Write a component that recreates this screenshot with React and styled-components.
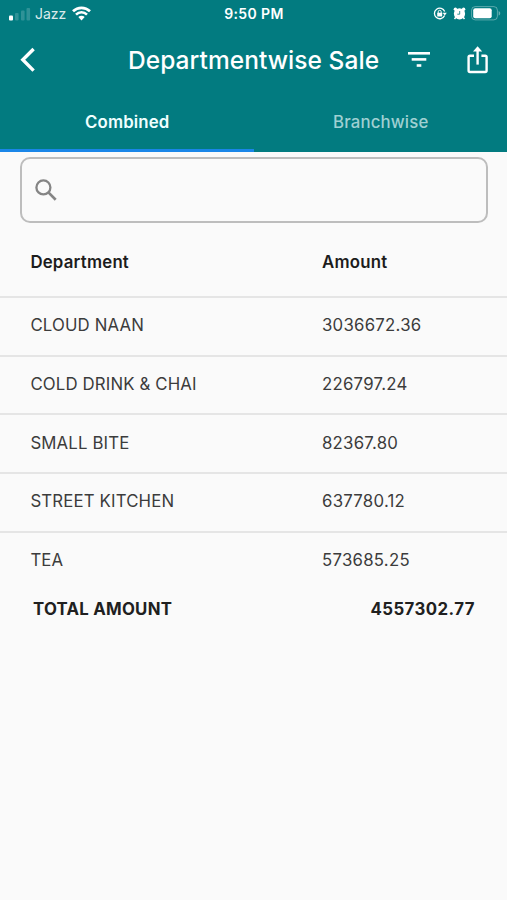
import React, { useState } from "react";
import styled, { createGlobalStyle } from "styled-components";

const departments = [
  { name: "CLOUD NAAN", amount: "3036672.36" },
  { name: "COLD DRINK & CHAI", amount: "226797.24" },
  { name: "SMALL BITE", amount: "82367.80" },
  { name: "STREET KITCHEN", amount: "637780.12" },
  { name: "TEA", amount: "573685.25" },
];

const tabs = ["Combined", "Branchwise"];

export default function App() {
  const [tab, setTab] = useState("Combined");

  return (
    <Screen>
      <GlobalStyle />
      <Header>
        <StatusBar>
          <Carrier>
            <SignalIcon />
            <CarrierName>Jazz</CarrierName>
            <WifiIcon />
          </Carrier>
          <Time>9:50 PM</Time>
          <StatusIcons>
            <RotationLockIcon />
            <AlarmIcon />
            <BatteryIcon />
          </StatusIcons>
        </StatusBar>
        <AppBar>
          <IconButton aria-label="Back">
            <BackIcon />
          </IconButton>
          <Title>Departmentwise Sale</Title>
          <Actions>
            <IconButton aria-label="Filter">
              <FilterIcon />
            </IconButton>
            <IconButton aria-label="Share">
              <ShareIcon />
            </IconButton>
          </Actions>
        </AppBar>
        <Tabs>
          {tabs.map((name) => (
            <Tab key={name} $active={name === tab} onClick={() => setTab(name)}>
              {name}
            </Tab>
          ))}
        </Tabs>
      </Header>
      <SearchBox>
        <SearchIcon />
        <SearchInput aria-label="Search" />
      </SearchBox>
      <TableHead>
        <span>Department</span>
        <span>Amount</span>
      </TableHead>
      {departments.map((item) => (
        <Row key={item.name}>
          <span>{item.name}</span>
          <Amount>{item.amount}</Amount>
        </Row>
      ))}
      <Total>
        <span>TOTAL AMOUNT</span>
        <TotalValue>4557302.77</TotalValue>
      </Total>
    </Screen>
  );
}

const SignalIcon = () => (
  <svg width="22" height="14" viewBox="0 0 22 14" fill="#fff">
    <rect x="0" y="8.5" width="4" height="5" rx="1" />
    <rect x="6" y="6" width="3.6" height="7.5" rx="1" opacity="0.18" />
    <rect x="12" y="3.5" width="3.6" height="10" rx="1" opacity="0.18" />
    <rect x="17.5" y="1" width="3.6" height="12.5" rx="1" opacity="0.18" />
  </svg>
);

const WifiIcon = () => (
  <svg width="19" height="15" viewBox="0 0 19 15" fill="none" stroke="#fff">
    <path d="M1 5.3C5.8 .6 13.2 .6 18 5.3" strokeWidth="2.7" />
    <path d="M4 8.6C7.1 5.5 11.9 5.5 15 8.6" strokeWidth="2.6" />
    <path d="M6.3 11C8.2 9.2 10.8 9.2 12.7 11L9.5 14.5Z" fill="#fff" stroke="none" />
  </svg>
);

const RotationLockIcon = () => (
  <svg width="14" height="13" viewBox="0 0 14 13" fill="none" stroke="#fff">
    <path d="M11.6 8.6A5.3 5.3 0 1 1 11.7 4.5" strokeWidth="1.3" />
    <path d="M9.6 5.8H13.8L11.8 8.6Z" fill="#fff" stroke="none" />
    <rect x="4.2" y="5.7" width="5" height="3.8" rx=".5" fill="#fff" stroke="none" />
    <path d="M5.2 6V4.8a1.5 1.5 0 0 1 3 0V6" strokeWidth="1" />
  </svg>
);

const AlarmIcon = () => (
  <svg width="13" height="13" viewBox="0 0 13 13" fill="#fff">
    <circle cx="6.5" cy="6.8" r="5.6" />
    <circle cx="2.4" cy="2.3" r="1.7" />
    <circle cx="10.6" cy="2.3" r="1.7" />
    <path d="M2.9 10.2L1.5 12M10.1 10.2L11.5 12" stroke="#fff" strokeWidth="1.5" />
    <path d="M6.7 4V7.2H4.3" fill="none" stroke="#027b80" strokeWidth=".8" />
  </svg>
);

const BatteryIcon = () => (
  <svg width="30" height="15" viewBox="0 0 30 15">
    <rect x=".6" y=".6" width="25.8" height="13.3" rx="3.6" fill="none" stroke="#fff" strokeOpacity=".35" />
    <rect x="2.2" y="2.3" width="18.5" height="10" rx="2" fill="#fff" />
    <path d="M27.6 5C29.8 5.8 29.8 8.8 27.6 9.6Z" fill="#fff" opacity=".4" />
  </svg>
);

const BackIcon = () => (
  <svg width="16" height="26" viewBox="0 0 16 26" fill="none" stroke="#fff" strokeWidth="3.4">
    <path d="M13.6 2L2.8 12.8L13.6 23.6" />
  </svg>
);

const FilterIcon = () => (
  <svg width="24" height="16" viewBox="0 0 24 16" fill="#fff">
    <rect x="1" y="0" width="22" height="2.6" />
    <rect x="4.7" y="6.1" width="14.6" height="2.6" />
    <rect x="9.7" y="12.2" width="4.6" height="2.6" />
  </svg>
);

const ShareIcon = () => (
  <svg width="22" height="28" viewBox="0 0 22 28" fill="none" stroke="#fff" strokeWidth="2.4">
    <path d="M7 9.7H3Q1.6 9.7 1.6 11.1V24.6Q1.6 26 3 26H18.2Q19.6 26 19.6 24.6V11.1Q19.6 9.7 18.2 9.7H14.4" />
    <path d="M10.6 4V18.6" />
    <path d="M6 5.6L10.6 .2L15.2 5.6Z" fill="#fff" stroke="none" />
  </svg>
);

const SearchIcon = () => (
  <svg width="22" height="22" viewBox="0 0 22 22" fill="none" stroke="#858585">
    <circle cx="8.4" cy="8.4" r="7" strokeWidth="2.3" />
    <path d="M13.4 13.4L20.7 20.7" strokeWidth="2.7" />
  </svg>
);

const GlobalStyle = createGlobalStyle`
  * {
    box-sizing: border-box;
  }
  body {
    margin: 0;
    background: #fafafa;
    font-family: Inter, Roboto, sans-serif;
  }
  svg {
    display: block;
    flex-shrink: 0;
  }
`;
const Screen = styled.div`
  width: 100%;
  height: 900px;
  display: flex;
  flex-direction: column;
  background: #fafafa;
  overflow: hidden;
`;
const Header = styled.header`
  height: 152px;
  flex-shrink: 0;
  display: flex;
  flex-direction: column;
  background: #027b80;
  color: #fff;
`;
const StatusBar = styled.div`
  height: 27px;
  padding: 0 6px 0 9px;
  display: grid;
  grid-template-columns: 1fr auto 1fr;
  align-items: center;
`;
const Carrier = styled.div`
  display: flex;
  align-items: center;
`;
const CarrierName = styled.span`
  margin: 0 6px 0 4px;
  font-size: 14px;
  letter-spacing: 0;
  opacity: 0.85;
`;
const Time = styled.span`
  margin-left: -2px;
  font-size: 14px;
  font-weight: 600;
  letter-spacing: 0.4px;
`;
const StatusIcons = styled.div`
  display: flex;
  justify-content: flex-end;
  align-items: center;
  gap: 5.5px;
`;
const AppBar = styled.div`
  height: 65px;
  padding: 0 18px 0 20px;
  display: flex;
  align-items: center;
`;
const IconButton = styled.button`
  padding: 0;
  border: 0;
  background: none;
  cursor: pointer;
`;
const Title = styled.h1`
  margin: 0 0 0 92px;
  font-size: 24.5px;
  font-weight: 500;
  letter-spacing: 0.05px;
  white-space: nowrap;
`;
const Actions = styled.div`
  margin-left: auto;
  display: flex;
  align-items: center;
  gap: 36px;
`;
const Tabs = styled.div`
  flex: 1;
  display: flex;
`;
const Tab = styled.button`
  flex: 1;
  padding: 3px 0 0 1px;
  border: 0;
  border-bottom: 3px solid ${(props) => (props.$active ? "#1a86e8" : "transparent")};
  background: none;
  color: ${(props) => (props.$active ? "#f0ffff" : "#9fd0d2")};
  font-family: inherit;
  font-size: 16.8px;
  font-weight: ${(props) => (props.$active ? 600 : 500)};
  letter-spacing: 0.15px;
  cursor: pointer;
`;
const SearchBox = styled.label`
  height: 66px;
  flex-shrink: 0;
  margin: 5px 19px 0 20px;
  padding: 0 13px;
  display: flex;
  align-items: center;
  gap: 12px;
  border: 2px solid #bdbdbd;
  border-radius: 10px;
`;
const SearchInput = styled.input`
  flex: 1;
  border: 0;
  outline: 0;
  background: none;
  font: inherit;
`;
const Line = styled.div`
  flex-shrink: 0;
  padding-left: 30.4px;
  display: grid;
  grid-template-columns: 291.6px 1fr;
  align-items: center;
  white-space: nowrap;
`;
const TableHead = styled(Line)`
  height: 73px;
  padding-top: 4px;
  color: #1c1c1c;
  font-size: 16.8px;
  font-weight: 600;
  letter-spacing: 0.22px;
`;
const Row = styled(Line)`
  height: 58.7px;
  padding-bottom: 2px;
  border-top: 2px solid #e5e5e5;
  color: #3c3c3c;
  font-size: 16.8px;
  letter-spacing: 0.15px;
`;
const Amount = styled.span`
  letter-spacing: 0.25px;
`;
const Total = styled.div`
  height: 38px;
  padding: 2px 32px 0 33px;
  display: flex;
  justify-content: space-between;
  align-items: center;
  color: #202020;
  font-size: 16.8px;
  font-weight: 700;
  letter-spacing: 0.25px;
`;
const TotalValue = styled.span`
  letter-spacing: 0.45px;
`;
